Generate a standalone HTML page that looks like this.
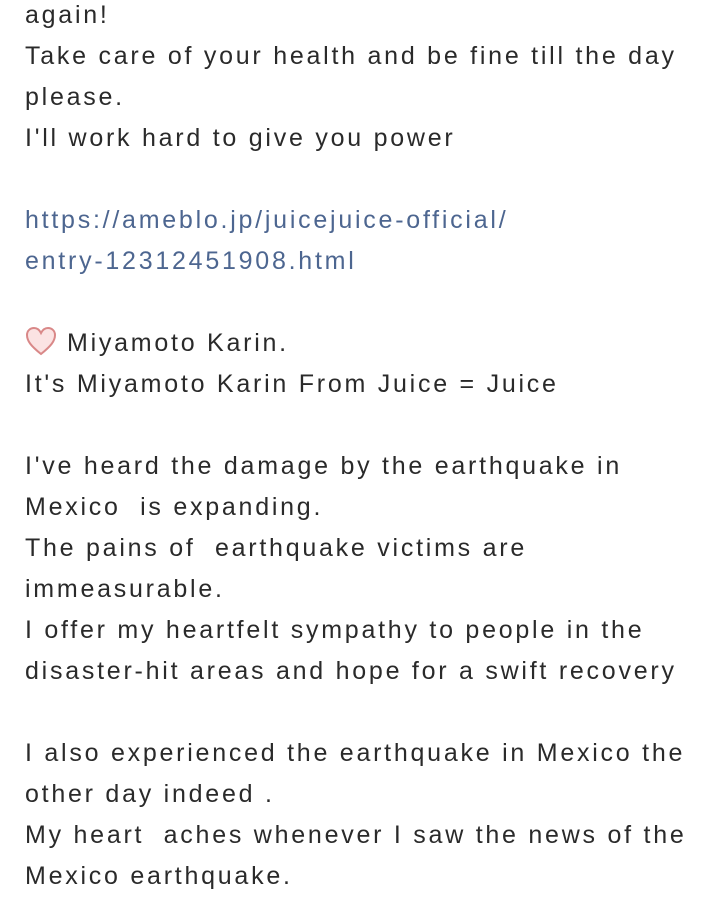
<!DOCTYPE html>
<html><head><meta charset="utf-8"><style>
html,body{margin:0;padding:0;background:#fff;width:717px;height:919px;overflow:hidden}
.w{position:absolute;left:25px;top:-5px;font-family:"Liberation Sans",sans-serif;font-size:25px;color:#2a2a2a;letter-spacing:2.75px}
.l{height:41px;line-height:41px;white-space:nowrap}
.a{color:#4d6690}
svg{vertical-align:middle;margin-right:10px;position:relative;top:-3px}
</style></head><body><div class="w">
<div class="l">again!</div>
<div class="l">Take care of your health and be fine till the day</div>
<div class="l">please.</div>
<div class="l">I'll work hard to give you power</div>
<div class="l"></div>
<div class="l a">https://ameblo.jp/juicejuice-official/</div>
<div class="l a">entry-12312451908.html</div>
<div class="l"></div>
<div class="l"><svg width="32" height="30" viewBox="0 0 32 30"><path d="M16 28 C6 20 2 15 2 9 C2 4.5 5.5 2 9 2 C12 2 14.5 4 16 7 C17.5 4 20 2 23 2 C26.5 2 30 4.5 30 9 C30 15 26 20 16 28 Z" fill="#fbe3e3" stroke="#d98888" stroke-width="2"/></svg>Miyamoto Karin.</div>
<div class="l">It's Miyamoto Karin From Juice = Juice</div>
<div class="l"></div>
<div class="l">I've heard the damage by the earthquake in</div>
<div class="l">Mexico&nbsp; is expanding.</div>
<div class="l">The pains of&nbsp; earthquake victims are</div>
<div class="l">immeasurable.</div>
<div class="l">I offer my heartfelt sympathy to people in the</div>
<div class="l">disaster-hit areas and hope for a swift recovery</div>
<div class="l"></div>
<div class="l">I also experienced the earthquake in Mexico the</div>
<div class="l">other day indeed .</div>
<div class="l">My heart&nbsp; aches whenever I saw the news of the</div>
<div class="l">Mexico earthquake.</div>
</div></body></html>
